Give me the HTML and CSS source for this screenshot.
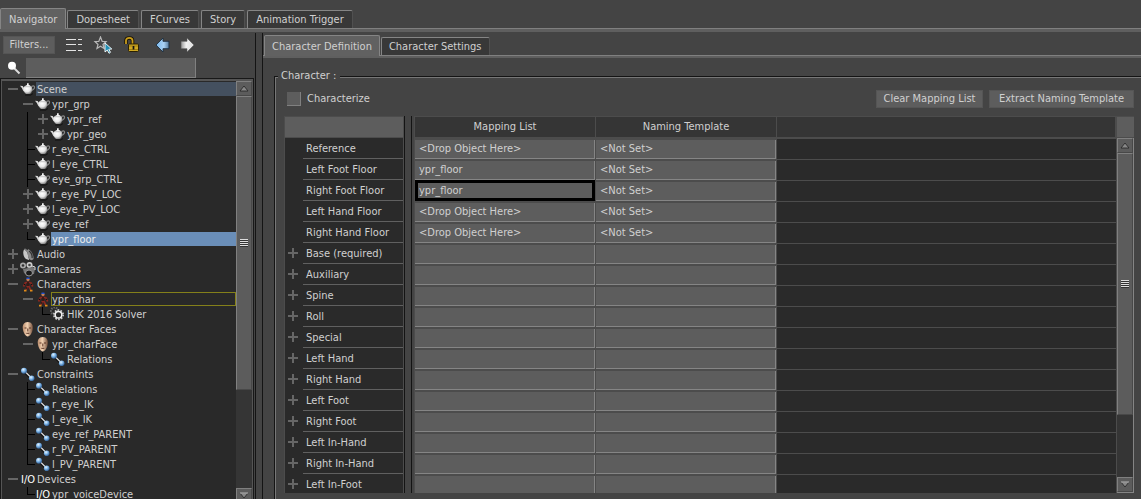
FILE: index.html
```html
<!DOCTYPE html>
<html lang="en">
<head>
<meta charset="utf-8">
<title>Navigator</title>
<link rel="stylesheet" href="styles.css">
</head>
<body>
<svg class="defs" aria-hidden="true">
  <defs>
    <radialGradient id="g-pot" cx="40%" cy="35%" r="70%"><stop offset="0" stop-color="#fff"/><stop offset=".55" stop-color="#e8e8e8"/><stop offset="1" stop-color="#777"/></radialGradient>
    <radialGradient id="g-ball" cx="38%" cy="32%" r="70%"><stop offset="0" stop-color="#e4f3ff"/><stop offset=".5" stop-color="#7db4e6"/><stop offset="1" stop-color="#2d5a90"/></radialGradient>
    <linearGradient id="g-face" x1="0" x2="1"><stop offset="0" stop-color="#b98c6c"/><stop offset=".45" stop-color="#f3d3b4"/><stop offset="1" stop-color="#74503c"/></linearGradient>
    <linearGradient id="g-blue" x1="0" x2="1"><stop offset="0" stop-color="#7ab6ea"/><stop offset=".6" stop-color="#a9d2f5"/><stop offset="1" stop-color="#55789a"/></linearGradient>
    <linearGradient id="g-white" x1="0" x2="1"><stop offset="0" stop-color="#999"/><stop offset=".4" stop-color="#f2f2f2"/><stop offset="1" stop-color="#ddd"/></linearGradient>
    <symbol id="pot" viewBox="0 0 16 15"><path d="M5 13h6l2-1.500" stroke="#111" fill="none"/><path d="M11.500 4.500c3-1.500 3.500.5 2.700 2-.6 1.100-1.600 1.500-2.500 2" fill="none" stroke="#888" stroke-width="1.200"/><path d="M0 3.700l2.700.3 2 3v3C2.500 9 2.500 6 1 5z" fill="#d8d8d8"/><path d="M3.800 5C5 3.200 10.800 3.200 12 5c.8 2.600-.2 5.500-1.900 7H6C4 10.600 3 7.600 3.800 5z" fill="url(#g-pot)"/><path d="M5 4.200C6 2.700 9.800 2.700 10.800 4.200zM7 1.300h1.700v2H7z" fill="#f4f4f4"/><path d="M4.500 4.700h6.800" stroke="#aaa" stroke-width=".6"/></symbol>
    <symbol id="rel" viewBox="0 0 16 15"><path d="M4 4l8 8" stroke="#111" stroke-width="3"/><path d="M4 3.500l8 8" stroke="#ddd" stroke-width="1.200"/><circle cx="4" cy="3.700" r="3" fill="url(#g-ball)"/><circle cx="11.700" cy="11.300" r="2.800" fill="url(#g-ball)"/></symbol>
    <symbol id="man" viewBox="0 0 16 15"><path d="M8 4.500v5M5.500 5.500h5M5.500 5.500l-2 4M10.700 5.500l2 4M7.500 9L6 13M8.700 9l2 4" stroke="#8c2820" stroke-width="1.700" fill="none"/><path d="M8 5v4M4.800 7l-.6 1M11.300 7l.6 1M6.800 10.500l-.4 1" stroke="#111" stroke-width="1.300"/><circle cx="8" cy="2.500" r="1.600" fill="#c98054"/><path d="M6.500 1.300h3" stroke="#2355d8" stroke-width="1.400"/><path d="M4 13.700h2.500M10 13.700h2.500" stroke="#e08a18" stroke-width="1.800"/></symbol>
    <symbol id="face" viewBox="0 0 16 15"><path d="M7.800 0c4 0 5.400 3 5 6.500-.3 4-2.700 8-5 8s-4.600-4-5-8C2.400 3 3.800 0 7.800 0z" fill="url(#g-face)"/><path d="M4.500 6h2M9 6h2M6.300 11.300h3M7.800 6.500v3" stroke="#5b3525" stroke-width="1"/></symbol>
    <symbol id="audio" viewBox="0 0 16 15"><path d="M5 1.500C2.500 3.500 2.500 9 6 12l3 1L9.500 5z" fill="#c8c8c8"/><path d="M4.500 2.500c2 0 4.500 4.500 4.500 9" stroke="#444" fill="none"/><path d="M8 2c3 1 6 6 5.500 10-1 1.800-3.500 1.300-4.500-.5C7.500 8.500 7 4 8 2z" fill="#8a8a8a"/><path d="M9 4c2.500 1.500 3.500 5 3 7" stroke="#333" stroke-width="1.300" fill="none"/></symbol>
    <symbol id="cam" viewBox="0 0 16 15"><circle cx="3" cy="3.500" r="3" fill="#aaa"/><circle cx="9.500" cy="3" r="3" fill="#ccc"/><circle cx="3" cy="3.500" r="1.300" fill="#333"/><circle cx="9.500" cy="3" r="1.300" fill="#444"/><path d="M3 7l10-2 2 2-1 5-7 1-3-2z" fill="#777"/><path d="M12 4l3 1v3" stroke="#ddd" fill="none"/><ellipse cx="9" cy="11" rx="3.500" ry="3" fill="#1b1b1b" stroke="#999"/></symbol>
    <symbol id="gear" viewBox="0 0 16 15"><circle cx="4.500" cy="4" r="3.500" fill="none" stroke="#666" stroke-width="2" stroke-dasharray="1.500 1"/><circle cx="8.500" cy="7.700" r="4.700" fill="none" stroke="#ccc" stroke-width="1.600" stroke-dasharray="1.700 1.250"/><circle cx="8.500" cy="7.700" r="3.300" fill="#292929" stroke="#f0f0f0" stroke-width="1.500"/></symbol>
    <symbol id="up" viewBox="0 0 10 7"><path d="M1 6l4-5 4 5z" fill="#888" stroke="#222" stroke-width=".8"/></symbol>
    <symbol id="down" viewBox="0 0 10 7"><path d="M1 1h8l-4 5z" fill="#888" stroke="#222" stroke-width=".8"/><path d="M1 1h8" stroke="#ccc"/></symbol>
  </defs>
</svg>
<div class="app">
  <nav class="tabs tabs-main">
    <button class="tab active">Navigator</button><button class="tab">Dopesheet</button><button class="tab">FCurves</button><button class="tab">Story</button><button class="tab">Animation Trigger</button>
  </nav>
  <div class="main">
    <aside class="side">
      <div class="tools">
        <button class="btn filters">Filters...</button>
        <button class="tool" aria-label="List"><svg width="18" height="18" viewBox="0 0 18 18"><path d="M1 3.500h10M1 8.500h10M1 14.500h10M13 3.500h4M13 8.500h4M13 14.500h4" stroke="#e4e4e4"/></svg></button>
        <button class="tool" aria-label="Select favorites"><svg width="20" height="18" viewBox="0 0 20 18"><path d="M7.500 1l1.700 4.500H13L10 8.500l1 4-3.500-2.300L4 12.500l1-4-3-3h3.800z" fill="#444" stroke="#b8b8b8" stroke-width="1.200"/><path d="M12 7v9l2.300-2 1.700 3.300 1.500-1-1.700-3 3-.3z" fill="#2490b5" stroke="#fff" stroke-width=".9"/></svg></button>
        <button class="tool" aria-label="Lock"><svg width="18" height="18" viewBox="0 0 18 18"><path d="M3 8V4.500C3 1 9.500 1 9.500 4.500V9" fill="none" stroke="#181204" stroke-width="3.500"/><path d="M3 8V4.500C3 1 9.500 1 9.500 4.500V9" fill="none" stroke="#c79c1c" stroke-width="1.800"/><rect x="5.500" y="8" width="10" height="7.500" rx="1" fill="#d0aa24" stroke="#2a2004"/><path d="M6 10h9M6 13.500h9" stroke="#94720c" stroke-width=".8"/><path d="M10.500 10v3.500" stroke="#111" stroke-width="1.700"/></svg></button>
        <button class="tool back" aria-label="Back"><svg width="16" height="16" viewBox="0 0 16 16"><path d="M1 8l7-7v3.300h6v7.400H8V15z" fill="url(#g-blue)" stroke="#1c2f42" stroke-width=".9"/></svg></button>
        <button class="tool" aria-label="Forward"><svg width="16" height="16" viewBox="0 0 16 16"><path d="M15 8L8 1v3.300H2v7.400h6V15z" fill="url(#g-white)" stroke="#555" stroke-width=".6"/></svg></button>
      </div>
      <div class="search">
        <label for="q" aria-label="Search"><svg width="14" height="14" viewBox="0 0 14 14"><path d="M7.500 7.500l5 5" stroke="#ddd" stroke-width="2"/><circle cx="5" cy="4.800" r="4" fill="#fff"/></svg></label>
        <input id="q" type="text">
      </div>
      <div class="tree-frame">
        <ul class="tree">
          <li class="l0 shade"><button class="tg minus" aria-label="Collapse"></button><svg class="ic"><use href="#pot"/></svg><span>Scene</span></li>
          <li class="l1"><button class="tg minus" aria-label="Collapse"></button><svg class="ic"><use href="#pot"/></svg><span>ypr_grp</span></li>
          <li class="l1"><i class="g v"></i><button class="tg plus" aria-label="Expand"></button><svg class="ic"><use href="#pot"/></svg><span>ypr_ref</span></li>
          <li class="l1"><i class="g v"></i><button class="tg plus" aria-label="Expand"></button><svg class="ic"><use href="#pot"/></svg><span>ypr_geo</span></li>
          <li class="l1"><i class="g v h"></i><svg class="ic"><use href="#pot"/></svg><span>r_eye_CTRL</span></li>
          <li class="l1"><i class="g v h"></i><svg class="ic"><use href="#pot"/></svg><span>l_eye_CTRL</span></li>
          <li class="l1"><i class="g v h"></i><svg class="ic"><use href="#pot"/></svg><span>eye_grp_CTRL</span></li>
          <li class="l1"><button class="tg plus" aria-label="Expand"></button><svg class="ic"><use href="#pot"/></svg><span>r_eye_PV_LOC</span></li>
          <li class="l1"><button class="tg plus" aria-label="Expand"></button><svg class="ic"><use href="#pot"/></svg><span>l_eye_PV_LOC</span></li>
          <li class="l1"><button class="tg plus" aria-label="Expand"></button><svg class="ic"><use href="#pot"/></svg><span>eye_ref</span></li>
          <li class="l1 selected"><i class="g e h"></i><svg class="ic"><use href="#pot"/></svg><span>ypr_floor</span></li>
          <li class="l0"><button class="tg plus" aria-label="Expand"></button><svg class="ic"><use href="#audio"/></svg><span>Audio</span></li>
          <li class="l0"><button class="tg plus" aria-label="Expand"></button><svg class="ic"><use href="#cam"/></svg><span>Cameras</span></li>
          <li class="l0"><button class="tg minus" aria-label="Collapse"></button><svg class="ic"><use href="#man"/></svg><span>Characters</span></li>
          <li class="l1 current"><button class="tg minus" aria-label="Collapse"></button><svg class="ic"><use href="#man"/></svg><span>ypr_char</span></li>
          <li class="l2"><i class="g e h"></i><svg class="ic"><use href="#gear"/></svg><span>HIK 2016 Solver</span></li>
          <li class="l0"><button class="tg minus" aria-label="Collapse"></button><svg class="ic"><use href="#face"/></svg><span>Character Faces</span></li>
          <li class="l1"><button class="tg minus" aria-label="Collapse"></button><svg class="ic"><use href="#face"/></svg><span>ypr_charFace</span></li>
          <li class="l2"><i class="g e h"></i><svg class="ic"><use href="#rel"/></svg><span>Relations</span></li>
          <li class="l0"><button class="tg minus" aria-label="Collapse"></button><svg class="ic"><use href="#rel"/></svg><span>Constraints</span></li>
          <li class="l1"><i class="g v h"></i><svg class="ic"><use href="#rel"/></svg><span>Relations</span></li>
          <li class="l1"><i class="g v h"></i><svg class="ic"><use href="#rel"/></svg><span>r_eye_IK</span></li>
          <li class="l1"><i class="g v h"></i><svg class="ic"><use href="#rel"/></svg><span>l_eye_IK</span></li>
          <li class="l1"><i class="g v h"></i><svg class="ic"><use href="#rel"/></svg><span>eye_ref_PARENT</span></li>
          <li class="l1"><i class="g v h"></i><svg class="ic"><use href="#rel"/></svg><span>r_PV_PARENT</span></li>
          <li class="l1"><i class="g e h"></i><svg class="ic"><use href="#rel"/></svg><span>l_PV_PARENT</span></li>
          <li class="l0"><button class="tg minus" aria-label="Collapse"></button><b class="ic io">I/O</b><span>Devices</span></li>
          <li class="l1"><i class="g e h"></i><b class="ic io">I/O</b><span>ypr_voiceDevice</span></li>
        </ul>
        <div class="bar">
          <button class="arrow" aria-label="Scroll up"><svg width="10" height="7"><use href="#up"/></svg></button>
          <div class="track"><div class="thumb thumb-tree"><i class="grip"></i></div></div>
          <button class="arrow" aria-label="Scroll down"><svg width="10" height="7"><use href="#down"/></svg></button>
        </div>
      </div>
    </aside>
    <div class="splitter"></div>
    <section class="panel">
      <nav class="tabs tabs-sub">
        <button class="tab active">Character Definition</button><button class="tab">Character Settings</button>
      </nav>
      <fieldset class="group">
        <legend>Character :</legend>
        <div class="actions">
          <input type="checkbox" id="chz"><label for="chz">Characterize</label>
          <button class="btn clear">Clear Mapping List</button>
          <button class="btn extract">Extract Naming Template</button>
        </div>
        <div class="sheet">
          <div class="names-box">
            <table class="names">
              <colgroup><col class="c-tg"><col></colgroup>
              <thead><tr><th colspan="2"></th></tr></thead>
              <tbody>
                <tr><td></td><th scope="row">Reference</th></tr>
                <tr><td></td><th scope="row">Left Foot Floor</th></tr>
                <tr><td></td><th scope="row">Right Foot Floor</th></tr>
                <tr><td></td><th scope="row">Left Hand Floor</th></tr>
                <tr><td></td><th scope="row">Right Hand Floor</th></tr>
                <tr><td><button class="tg plus" aria-label="Expand"></button></td><th scope="row">Base (required)</th></tr>
                <tr><td><button class="tg plus" aria-label="Expand"></button></td><th scope="row">Auxiliary</th></tr>
                <tr><td><button class="tg plus" aria-label="Expand"></button></td><th scope="row">Spine</th></tr>
                <tr><td><button class="tg plus" aria-label="Expand"></button></td><th scope="row">Roll</th></tr>
                <tr><td><button class="tg plus" aria-label="Expand"></button></td><th scope="row">Special</th></tr>
                <tr><td><button class="tg plus" aria-label="Expand"></button></td><th scope="row">Left Hand</th></tr>
                <tr><td><button class="tg plus" aria-label="Expand"></button></td><th scope="row">Right Hand</th></tr>
                <tr><td><button class="tg plus" aria-label="Expand"></button></td><th scope="row">Left Foot</th></tr>
                <tr><td><button class="tg plus" aria-label="Expand"></button></td><th scope="row">Right Foot</th></tr>
                <tr><td><button class="tg plus" aria-label="Expand"></button></td><th scope="row">Left In-Hand</th></tr>
                <tr><td><button class="tg plus" aria-label="Expand"></button></td><th scope="row">Right In-Hand</th></tr>
                <tr><td><button class="tg plus" aria-label="Expand"></button></td><th scope="row">Left In-Foot</th></tr>
              </tbody>
            </table>
          </div>
          <div class="splitter"></div>
          <div class="map-box">
            <table class="map">
              <thead><tr><th class="c">Mapping List</th><th class="c">Naming Template</th><th></th></tr></thead>
              <tbody>
                <tr><td><div>&lt;Drop Object Here&gt;</div></td><td><div>&lt;Not Set&gt;</div></td><td></td></tr>
                <tr><td><div>ypr_floor</div></td><td><div>&lt;Not Set&gt;</div></td><td></td></tr>
                <tr><td class="focus"><div>ypr_floor</div></td><td><div>&lt;Not Set&gt;</div></td><td></td></tr>
                <tr><td><div>&lt;Drop Object Here&gt;</div></td><td><div>&lt;Not Set&gt;</div></td><td></td></tr>
                <tr><td><div>&lt;Drop Object Here&gt;</div></td><td><div>&lt;Not Set&gt;</div></td><td></td></tr>
                <tr><td><div></div></td><td><div></div></td><td></td></tr>
                <tr><td><div></div></td><td><div></div></td><td></td></tr>
                <tr><td><div></div></td><td><div></div></td><td></td></tr>
                <tr><td><div></div></td><td><div></div></td><td></td></tr>
                <tr><td><div></div></td><td><div></div></td><td></td></tr>
                <tr><td><div></div></td><td><div></div></td><td></td></tr>
                <tr><td><div></div></td><td><div></div></td><td></td></tr>
                <tr><td><div></div></td><td><div></div></td><td></td></tr>
                <tr><td><div></div></td><td><div></div></td><td></td></tr>
                <tr><td><div></div></td><td><div></div></td><td></td></tr>
                <tr><td><div></div></td><td><div></div></td><td></td></tr>
                <tr><td><div></div></td><td><div></div></td><td></td></tr>
              </tbody>
            </table>
          </div>
          <div class="bar-col">
            <div class="corner"></div>
            <div class="bar">
              <button class="arrow" aria-label="Scroll up"><svg width="10" height="7"><use href="#up"/></svg></button>
              <div class="track"><div class="thumb thumb-map"><i class="grip"></i></div></div>
              <button class="arrow" aria-label="Scroll down"><svg width="10" height="7"><use href="#down"/></svg></button>
            </div>
          </div>
        </div>
      </fieldset>
    </section>
  </div>
</div>
</body>
</html>
```
FILE: styles.css
```css
* { box-sizing: border-box; }
body {
  margin: 0;
  background: #444;
  color: #d0d0d0;
  font: 11px/16px "DejaVu Sans Condensed", "DejaVu Sans", sans-serif;
}
button, input { font: inherit; color: inherit; }
button { padding: 0; border: 0; background: none; white-space: nowrap; }
.defs { position: absolute; width: 0; height: 0; }
.app { display: flex; flex-direction: column; height: 100vh; overflow: hidden; }

.tabs { display: flex; align-items: flex-end; gap: 2px; flex: none; box-shadow: inset 0 -3px #5f5f5f, inset 0 -4px #808080; padding-bottom: 4px; }
.tabs-main { padding-top: 8px; margin-bottom: 1px; }
.tab {
  height: 18px;
  padding: 1px 8px 0;
  background: #383838;
  border: solid #858585;
  border-width: 1px 0 0 1px;
  border-right: 1px solid #505050;
  border-radius: 2px 2px 0 0;
}
.tab.active { height: 21px; background: #616161; border-color: #858585; margin-bottom: -1px; margin-right: -1px; }

.main { display: flex; flex: 1; min-height: 0; }
.side { display: flex; flex-direction: column; width: 255px; flex: none; }
.tools { display: flex; align-items: center; height: 24px; padding-left: 3px; gap: 10px; }
.btn { height: 18px; background: #5d5d5d; border: 1px solid #555; }
.filters { width: 52px; }
.tool { display: flex; }
.tool.back { margin-left: 4px; margin-right: -2px; }
.search { display: flex; align-items: center; gap: 5px; height: 22px; padding-left: 7px; }
.search label { display: flex; }
.search input { width: 170px; height: 20px; padding: 0 4px; background: #5d5d5d; border: solid #808080; border-width: 0 1px 1px 0; }

.tree-frame {
  display: flex;
  flex: 1;
  min-height: 0;
  margin: 0 2px -4px 1px;
  background: #292929;
  border: solid #555;
  border-width: 2px 1px 0;
  outline: 1px solid #181818;
}
.tree { flex: 1; min-width: 0; margin: 0; padding: 1px 0 0 3px; list-style: none; overflow: hidden; }
.tree li { display: flex; height: 15px; }
.tree .l1 { padding-left: 15px; }
.tree .l2 { padding-left: 30px; }
.tree span { height: 14px; padding-left: 1px; }
.tree .shade span, .selected span, .current span { flex: 1; }
.shade span { background: #44505f; }
.selected span { background: #6a8eb8; color: #eee; }
.current span { outline: 1px solid #84801a; outline-offset: -1px; }
.ic { width: 16px; height: 15px; flex: none; }
.io { display: flex; justify-content: center; font-weight: normal; color: #fff; }
.tg {
  width: 15px;
  height: 15px;
  flex: none;
  background: linear-gradient(#666, #666) 3px 6px / 10px 2px no-repeat;
}
.plus { background: linear-gradient(#666, #666) 3px 6px / 10px 2px no-repeat, linear-gradient(#666, #666) 7px 2px / 2px 10px no-repeat; }
.g { width: 15px; height: 15px; flex: none; }
.v { background: linear-gradient(#000, #000) 7px 0 / 1px 15px no-repeat; }
.v.h { background: linear-gradient(#000, #000) 7px 0 / 1px 15px no-repeat, linear-gradient(#000, #000) 7px 7px / 8px 1px no-repeat; }
.e.h { background: linear-gradient(#000, #000) 7px 0 / 1px 8px no-repeat, linear-gradient(#000, #000) 7px 7px / 8px 1px no-repeat; }

.bar { display: flex; flex-direction: column; width: 16px; flex: none; background: #353535; }
.arrow, .thumb { background: #5c5c5c; border: 1px solid; border-color: #808080 #484848 #484848 #808080; }
.arrow { display: flex; align-items: center; justify-content: center; height: 15px; flex: none; }
.track { flex: 1; min-height: 0; }
.thumb { display: flex; align-items: center; justify-content: center; }
.thumb-tree { height: 75%; }
.thumb-map { height: 81%; }
.grip { width: 8px; height: 8px; background: repeating-linear-gradient(#ddd 0 1px, #333 1px 2px); }

.splitter { width: 8px; flex: none; border: solid #141414; border-width: 0 1px; background: #444; }

.panel { display: flex; flex-direction: column; flex: 1; min-width: 0; }
.tabs-sub { padding: 2px 0 3px 1px; box-shadow: inset 0 -2px #5f5f5f, inset 0 -3px #808080; }
.tabs-sub .tab { padding: 1px 7px 0; }
.group {
  display: flex;
  flex-direction: column;
  flex: 1;
  min-width: 0;
  min-height: 0;
  margin: 10px 0 0 11px;
  padding: 6px 7px 6px 9px;
  border: solid #141414;
  border-width: 1px 0 0 1px;
  box-shadow: inset 1px 1px #777;
}
.group legend { padding: 0 4px 0 3px; margin-left: -6px; background: #444; }
.actions { display: flex; align-items: center; gap: 6px; height: 18px; margin: 0 0 8px 3px; flex: none; }
.actions input { appearance: none; width: 14px; height: 14px; margin: 0; background: #5d5d5d; border: solid #808080; border-width: 0 1px 1px 0; }
.actions label { flex: 1; }
.clear { width: 107px; }
.extract { width: 145px; }
.sheet { display: flex; flex: 1; min-height: 0; }
.names-box { width: 120px; flex: none; overflow: hidden; padding-right: 1px; border-left: 1px solid #4c4c4c; background: #4c4c4c; }
table { width: 100%; border-collapse: separate; border-spacing: 0; table-layout: fixed; }
th, td { height: 21px; padding: 0; font-weight: normal; text-align: left; white-space: nowrap; }
.names { background: #2a2a2a; }
.c-tg { width: 18px; }
.names thead th { height: 22px; background: #5d5d5d; border: solid #4c4c4c; border-width: 1px 0; }
.names tbody th { border-bottom: 1px solid #606060; padding: 2px 0 0 3px; }
.names td { vertical-align: top; padding-top: 3px; }
.names .tg { display: block; }
.map-box { flex: 1; min-width: 0; margin-left: 2px; overflow: hidden; background: #2a2a2a; border-left: 1px solid #4c4c4c; }
.map thead th { height: 22px; background: #353535; border: solid #4c4c4c; border-width: 1px 1px 1px 0; text-align: center; }
.map .c { width: 181px; }
.map tbody td { border-top: 1px solid #4c4c4c; }
.map tbody td:not(:last-child) { background: #4c4c4c; border-right: 1px solid #4c4c4c; border-top-width: 2px; }
.map div { display: flex; align-items: center; height: 19px; padding-left: 4px; background: #5d5d5d; border: solid #858585; border-width: 0 1px 1px 0; }
.map tbody td.focus { border-top-width: 0; }
.map .focus div { height: 21px; border: 3px solid #000; padding-left: 1px; }
.bar-col { display: flex; flex-direction: column; width: 18px; flex: none; border-left: 1px solid #4c4c4c; }
.corner { height: 22px; flex: none; background: #5d5d5d; border: solid #4c4c4c; border-width: 1px 0; }
.bar-col .bar { flex: 1; width: 17px; min-height: 0; border: solid #858585; border-width: 0 1px 1px 0; }
```
